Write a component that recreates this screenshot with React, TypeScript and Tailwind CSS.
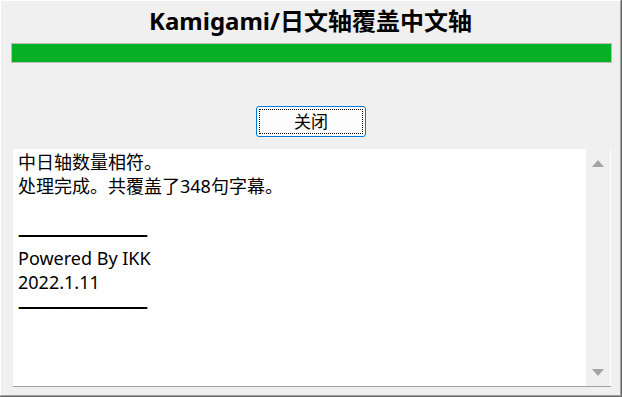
export default function App() {
  const lines = [
    "中日轴数量相符。",
    "处理完成。共覆盖了348句字幕。",
    "",
    "————————",
    "Powered By IKK",
    "2022.1.11",
    "————————",
  ];

  return (
    <div className="w-[622px] h-[397px] border-r border-b border-[#696969] bg-[#f0f0f0]">
      <div
        className="h-full flex flex-col border-t border-l border-t-white border-l-white border-r border-b border-r-[#a0a0a0] border-b-[#a0a0a0]"
        style={{ fontFamily: '"Noto Sans", "Noto Sans CJK SC", sans-serif' }}
      >
        {/* title */}
        <div className="h-[42px] pt-[4px] text-center text-[24px] leading-[32px] font-bold text-black">
          Kamigami/日文轴覆盖中文轴
        </div>

        {/* progress */}
        <div className="ml-[10px] w-[601px] h-[20px] border border-[#bcbcbc] bg-[#e6e6e6]">
          <div className="h-full w-full bg-[#06b025]" />
        </div>

        {/* button */}
        <div className="flex justify-center pt-[43px] pl-[1px]">
          <button className="w-[110px] h-[31px] rounded-[3px] border border-[#0078d7] bg-[#fdfdfd] p-[2px]">
            <div className="h-full w-full border border-dotted border-black flex items-center justify-center text-[17px] leading-none text-black">
              关闭
            </div>
          </button>
        </div>

        {/* log box */}
        <div className="mt-[11px] ml-[11px] w-[599px] h-[239px] flex bg-white border-t border-l border-t-[#f0f0f0] border-l-[#f0f0f0] border-b border-b-[#a0a0a0]">
          <div className="flex-1 pl-[5px] pt-[1px] text-[18px] leading-[24px] text-black">
            {lines.map((l, i) =>
              l.startsWith("—") ? (
                <div key={i} className="h-[24px] whitespace-pre font-bold tracking-[-2px]">
                  {l}
                </div>
              ) : (
                <div key={i} className="h-[24px] whitespace-pre">
                  {l}
                </div>
              )
            )}
          </div>
          <div className="w-[25px] bg-[#f0f0f0] border-r border-white flex flex-col items-center justify-between pt-[11px] pb-[10px]">
            <svg width="12" height="7" viewBox="0 0 12 7">
              <path d="M6 0 L12 7 L0 7 Z" fill="#a3a3a3" />
            </svg>
            <svg width="12" height="7" viewBox="0 0 12 7">
              <path d="M0 0 L12 0 L6 7 Z" fill="#a3a3a3" />
            </svg>
          </div>
        </div>
      </div>
    </div>
  );
}
